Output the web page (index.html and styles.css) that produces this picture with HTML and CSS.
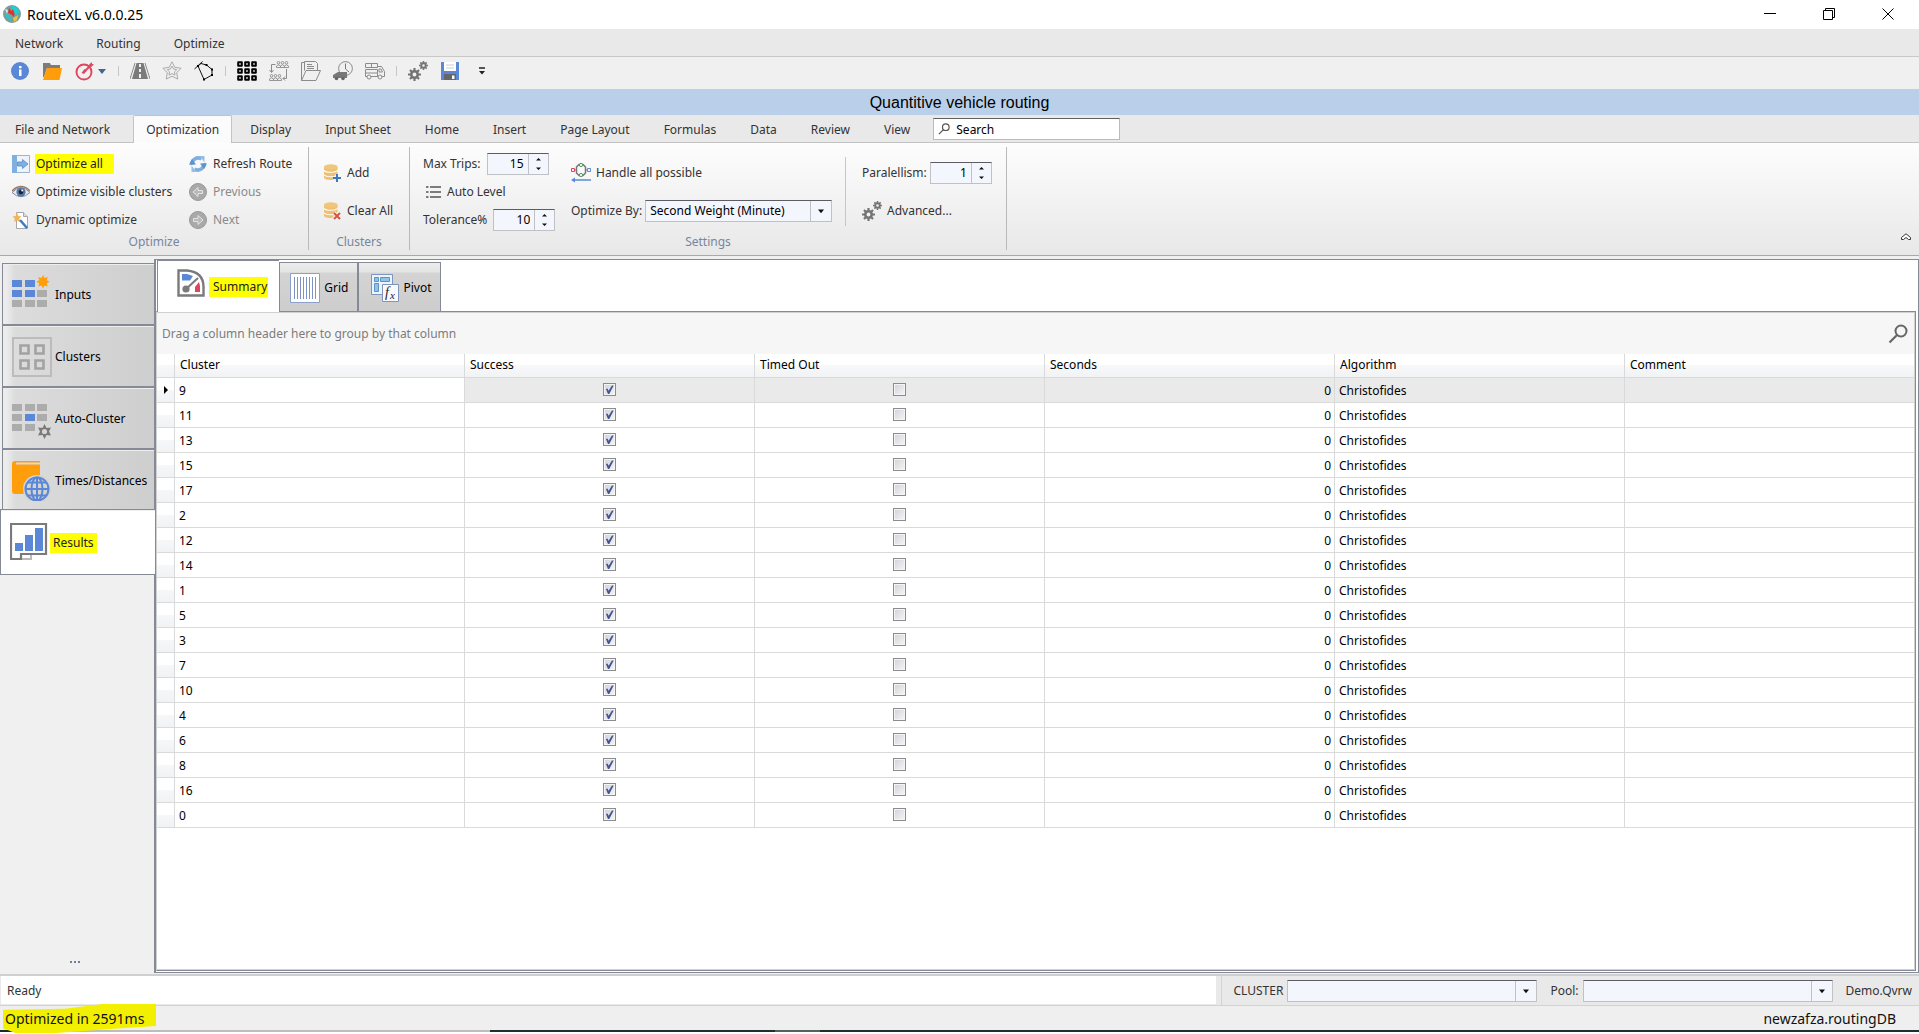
FILE: index.html
```
<!DOCTYPE html>
<html lang="en">
<head>
<meta charset="utf-8">
<title>RouteXL v6.0.0.25</title>
<link rel="stylesheet" href="styles.css">
</head>
<body>
<svg class="defs" width="0" height="0" aria-hidden="true">
  <symbol id="gear" viewBox="0 0 12 12"><circle cx="6" cy="6" r="3" fill="none" stroke="currentColor" stroke-width="2.400"/><path d="M6 0v2.500M6 9.500V12M0 6h2.500M9.500 6H12M1.800 1.800l1.700 1.700M8.500 8.500l1.700 1.700M1.800 10.200l1.700-1.700M8.500 3.500l1.700-1.700" stroke="currentColor" stroke-width="2"/></symbol>
  <symbol id="gears" viewBox="0 0 20 20"><use href="#gear" x="0" y="7" width="13" height="13"/><use href="#gear" x="11" y="0" width="9" height="9"/></symbol>
  <symbol id="lens" viewBox="0 0 20 20"><circle cx="13" cy="7" r="5.500" fill="none" stroke="currentColor" stroke-width="2"/><path d="M9 11l-7.500 7.500" stroke="currentColor" stroke-width="2.200"/></symbol>
  <symbol id="db" viewBox="0 0 17 18"><path d="M0 3v10.500c0 1.600 3 2.500 6.500 2.500s7-.900 7-2.500V3z" fill="#edc175"/><ellipse cx="6.800" cy="2.800" rx="6.800" ry="2.600" fill="#f0c67c"/><path d="M0 6.300c1 1.600 4 2 6.800 2s5.700-.400 6.800-2M0 10.700c1 1.600 4 2 6.800 2s5.700-.400 6.800-2" fill="none" stroke="#fff" stroke-width="1.100"/></symbol>
  <symbol id="spin" viewBox="0 0 9 14"><path d="M2 3.500L4.500 1 7 3.500zM2 10.500L4.500 13 7 10.500z" fill="#111"/></symbol>
  <symbol id="drop" viewBox="0 0 8 5"><path d="M1 .500h6L4 4.200z" fill="#111"/></symbol>
  <symbol id="people" viewBox="0 0 13 7"><g fill="none" stroke="currentColor" stroke-width=".900"><circle cx="2.500" cy="1.800" r="1.300"/><circle cx="6.500" cy="1.800" r="1.300"/><circle cx="10.500" cy="1.800" r="1.300"/><path d="M.500 6.500V5q2-2.500 4 0v1.500zM4.500 6.500V5q2-2.500 4 0v1.500zM8.500 6.500V5q2-2.500 4 0v1.500z"/></g></symbol>
</svg>

<header class="titlebar">
  <svg class="logo" viewBox="0 0 18 18" width="18" height="18"><circle cx="9" cy="9" r="9" fill="#7d9c9d"/><path d="M9 1a8 8 0 0 1 7.500 6L13 10l-2-3-3-1z" fill="#20cfd3"/><path d="M2 8l4 2 3 6a8 8 0 0 1-7-8z" fill="#2cc3c7"/><path d="M6 3l2.500 3L10 4l1.500 4.500L11 12 8.500 9.500 5 8z" fill="#d8372f"/><path d="M10 13l5-3-1 5-3 2z" fill="#e6c336"/><path d="M2 4l3 1-1 4z" fill="#dfe9e6"/></svg>
  <h1>RouteXL v6.0.0.25</h1>
  <div class="window-buttons">
    <button aria-label="Minimize"><svg viewBox="0 0 12 12" width="12" height="12"><path d="M0 5.500h12" stroke="#000"/></svg></button>
    <button aria-label="Restore"><svg viewBox="0 0 12 12" width="12" height="12"><path d="M.500 2.500h9v9h-9zM2.500 2V.500h9v9H10" fill="none" stroke="#000"/></svg></button>
    <button aria-label="Close"><svg viewBox="0 0 12 12" width="12" height="12"><path d="M.500.500l11 11M11.500.500l-11 11" stroke="#000"/></svg></button>
  </div>
</header>

<nav class="menubar"><button>Network</button><button>Routing</button><button>Optimize</button></nav>

<div class="toolbar">
  <button aria-label="Information"><svg viewBox="0 0 20 20" width="20" height="20"><circle cx="10" cy="10" r="9" fill="#5a87d6"/><path d="M9 5h2.500v2.200H9zM9 8.500h2.500V15H9z" fill="#fff"/></svg></button>
  <button aria-label="Open"><svg viewBox="0 0 20 20" width="20" height="20"><path d="M1 2h7l1 2h9v3H5L2 16H1z" fill="#7c7c7c"/><path d="M5 7h15l-2.500 12H1z" fill="#ff9d0a"/></svg></button>
  <button class="split" aria-label="Target"><svg viewBox="0 0 20 20" width="20" height="20"><circle cx="9" cy="11" r="7.500" fill="none" stroke="#e0455e" stroke-width="1.900"/><path d="M9 11l8-8" stroke="#e0455e" stroke-width="2"/><path d="M14 4l2.500-3 .500 2 2 .500-3 2.500zM6.500 12l3-4 2 2-2.500 3z" fill="#e0455e"/></svg><svg class="caret" viewBox="0 0 8 5" width="8" height="5"><path d="M0 0h8L4 5z" fill="#45658e"/></svg></button>
  <i class="sep"></i>
  <button aria-label="Road"><svg viewBox="0 0 20 20" width="20" height="20"><path d="M6.500 2h7L18 18H2z" fill="#7a7a7a"/><path d="M5 2L0 18M15 2l5 16" stroke="#8a8a8a"/><path d="M10 3v3M10 8v3M10 13v4" stroke="#f0f0f0" stroke-width="2"/></svg></button>
  <button aria-label="Favorite"><svg viewBox="0 0 20 20" width="20" height="20" fill="none" stroke="#aaa"><path d="M10 .800l2.800 5.500 6.300 1-4.400 4.300 1 6.500L10 15.200l-5.700 2.900 1-6.500L.900 7.300l6.300-1z"/><path d="M10 5l1.600 3 3.200.600-2.300 2.200.5 3.300-3-1.500-3 1.500.500-3.300L5.200 8.600 8.400 8z"/></svg></button>
  <button aria-label="Polygon"><svg viewBox="0 0 20 20" width="20" height="20"><path d="M.500 8l8-7.500M4 5l3-2.500L12.500 4 18 8.500v5.500L10 18.500z" fill="none" stroke="#111"/><path d="M3 4h2v2H3zM11.500 3h2v2h-2zM17 7.500h2v2h-2zM17 13h2v2h-2zM9 17.500h2v2H9z" fill="#000"/></svg></button>
  <i class="sep"></i>
  <button aria-label="Clusters grid"><svg viewBox="0 0 20 20" width="20" height="20" fill="none" stroke="#000" stroke-width="2"><path d="M1.200 1.200h3.600v3.600H1.200zM8.200 1.200h3.600v3.600H8.200zM15.200 1.200h3.600v3.600h-3.600zM1.200 8.200h3.600v3.600H1.200zM8.200 8.200h3.600v3.600H8.200zM15.200 8.200h3.600v3.600h-3.600zM1.200 15.200h3.600v3.600H1.200zM8.200 15.200h3.600v3.600H8.200zM15.200 15.200h3.600v3.600h-3.600z" stroke-linejoin="round"/></svg></button>
  <button class="gray" aria-label="Teams"><svg viewBox="0 0 20 20" width="20" height="20"><use href="#people" x="7" y="0" width="13" height="7"/><use href="#people" x="0" y="13" width="13" height="7"/><path d="M6.500 3.500h-4v7.500M.500 9l2 2.500 2-2.500M17.500 8v9.500h-3.500M16 15.500l-2 2 2 2" fill="none" stroke="currentColor"/></svg></button>
  <button class="gray" aria-label="Documents"><svg viewBox="0 0 20 20" width="20" height="20" fill="none" stroke="currentColor"><path d="M.500 19.500V1.500h3M3.500 9.500v-9h11l2 2v7M.500 19.500h14.500l4.500-10H5z"/><path d="M6 3.500h5M6 5.500h7M6 7.500h7"/></svg></button>
  <button class="gray" aria-label="Delivery times"><svg viewBox="0 0 20 20" width="20" height="20"><circle cx="12.500" cy="7.500" r="6.900" fill="none" stroke="#8a8a8a"/><path d="M12.500 2.500v5.500l3.500 3" fill="none" stroke="#777"/><path d="M5 11h9v6H0v-3z" fill="#777"/><circle cx="3.500" cy="17.500" r="1.800" fill="#666"/><circle cx="10" cy="17.500" r="1.800" fill="#666"/></svg></button>
  <button class="gray" aria-label="Truck"><svg viewBox="0 0 20 20" width="20" height="20" fill="none" stroke="currentColor"><path d="M.500 2.500h12v4H.500zM6.500 2.500v4M.500 8.500h12v7H.500zM.500 12h12M12.500 5.500h4l3 5v5h-7M14 8h2l1.500 3H14z"/><circle cx="4" cy="16" r="2" fill="#f0f0f0"/><circle cx="15" cy="16" r="2" fill="#f0f0f0"/></svg></button>
  <i class="sep"></i>
  <button class="dark" aria-label="Settings"><svg width="20" height="20"><use href="#gears"/></svg></button>
  <button aria-label="Save"><svg viewBox="0 0 20 20" width="20" height="20"><path d="M1 1h18v18H1z" fill="#5a87d6"/><path d="M4 1h12v9H4z" fill="#fff"/><path d="M6 4h8M6 7h8" stroke="#ccc"/><path d="M4 13h12v6H4z" fill="#666"/><path d="M12 14.500h2.500V18H12z" fill="#fff"/></svg></button>
  <button aria-label="Customize"><svg viewBox="0 0 6 8" width="6" height="8"><path d="M0 1h6" stroke="#222" stroke-width="1.500"/><path d="M0 4h6L3 7.500z" fill="#222"/></svg></button>
</div>

<h2 class="doc-title">Quantitive vehicle routing</h2>

<nav class="ribbon-tabs">
  <button>File and Network</button><button class="active">Optimization</button><button>Display</button><button>Input Sheet</button><button>Home</button><button>Insert</button><button>Page Layout</button><button>Formulas</button><button>Data</button><button>Review</button><button>View</button>
  <label class="search"><svg width="12" height="12"><use href="#lens"/></svg><input type="text" value="Search" aria-label="Search"></label>
</nav>

<section class="ribbon">
  <div class="group optimize">
    <div class="columns">
      <div class="col three">
        <button><svg viewBox="0 0 18 18" width="18" height="18"><path d="M.500.500h17v17H.500z" fill="#eef3fb" stroke="#9fb2d2"/><path d="M0 0h5v18H0z" fill="#7fb0e0"/><path d="M5.500 7h5V4.500L16 9l-5.500 4.500V11h-5z" fill="#7eb0e2" stroke="#5a8cc4" stroke-width=".800"/></svg><span class="mark">Optimize all</span></button>
        <button><svg viewBox="0 0 18 18" width="18" height="18"><path d="M0 9.500Q9 0 18 9.500 9 18 0 9.500z" fill="#e4e9f3" stroke="#87899a"/><path d="M0 8Q9-1 18 8" fill="none" stroke="#9a7a62" stroke-width="1.600"/><circle cx="9" cy="9" r="4.600" fill="#5379a9"/><circle cx="9" cy="9" r="2.300" fill="#14243c"/><circle cx="10.200" cy="7.500" r="1" fill="#fff"/></svg><span>Optimize visible clusters</span></button>
        <button><svg viewBox="0 0 18 18" width="18" height="18"><path d="M4.500 1.500h7l4 4v12h-11z" fill="#fff" stroke="#a8a8a8"/><path d="M11.500 1.500v4h4" fill="#ddd" stroke="#a8a8a8"/><path d="M5 2l1.400 3 3.200.400-2.400 2.200.7 3.400L5 9.400 2.100 11l.7-3.400L.400 5.400 3.600 5z" fill="#f2b457"/><path d="M8 9l7 8" stroke="#3d7abf" stroke-width="2.600"/></svg><span>Dynamic optimize</span></button>
      </div>
      <div class="col three">
        <button><svg viewBox="0 0 18 18" width="18" height="18"><path d="M3 10A6.200 6.200 0 0 1 12.500 4M15 8a6.200 6.200 0 0 1-9.500 6" fill="none" stroke="#7fb0e0" stroke-width="3.600"/><path d="M0 9.500h7L3 4zM11 8.500h7l-3 5.500z" fill="#5b94d0"/><path d="M10.500 1h5v6.500zM7.500 17h-5v-6.500z" fill="#94bfe8"/></svg><span>Refresh Route</span></button>
        <button disabled><svg viewBox="0 0 18 18" width="18" height="18"><circle cx="9" cy="9" r="8.500" fill="#a9a9a9" stroke="#989898"/><path d="M4 9l5-4.500V7.500h4.500v3H9v3z" fill="#b8b8b8" stroke="#e4e4e4"/></svg><span>Previous</span></button>
        <button disabled><svg viewBox="0 0 18 18" width="18" height="18"><circle cx="9" cy="9" r="8.500" fill="#a9a9a9" stroke="#989898"/><path d="M14 9L9 4.500V7.500H4.500v3H9v3z" fill="#b8b8b8" stroke="#e4e4e4"/></svg><span>Next</span></button>
      </div>
    </div>
    <h3>Optimize</h3>
  </div>
  <div class="group clusters">
    <div class="columns">
      <div class="col two">
        <button><svg viewBox="0 0 17 18" width="17" height="18"><use href="#db" width="17" height="18"/><path d="M13 10.500v7M9.500 14h7" stroke="#f4f4f4" stroke-width="4"/><path d="M13 10v8M9 14h8" stroke="#3d78bd" stroke-width="2"/></svg><span>Add</span></button>
        <button><svg viewBox="0 0 17 18" width="17" height="18"><use href="#db" width="17" height="18"/><path d="M10 11l6 6M16 11l-6 6" stroke="#f4f4f4" stroke-width="4"/><path d="M10 11l6 6M16 11l-6 6" stroke="#d9533c" stroke-width="2"/></svg><span>Clear All</span></button>
      </div>
    </div>
    <h3>Clusters</h3>
  </div>
  <div class="group settings">
    <div class="columns">
      <div class="col three">
        <label class="field">Max Trips:<span class="spin"><input type="number" value="15"><svg width="9" height="14"><use href="#spin"/></svg></span></label>
        <button class="list"><svg viewBox="0 0 15 14" width="15" height="14"><path d="M0 2h2.500M4 2h11M0 7h2.500M4 7h11M0 12h2.500M4 12h11" stroke="#7c7c7c" stroke-width="2"/></svg><span>Auto Level</span></button>
        <label class="field">Tolerance%<span class="spin"><input type="number" value="10"><svg width="9" height="14"><use href="#spin"/></svg></span></label>
      </div>
      <div class="col two">
        <button><svg viewBox="0 0 20 20" width="20" height="20" fill="none"><path d="M4 7h2M14 7h2" stroke="#777"/><path d="M5.500 4L8 1.500h4L14.500 4v6L12 12.500H8L5.500 10z" stroke="#777" stroke-width="1.500"/><path d="M.500 5.500h3v3h-3z" stroke="#e0455e"/><path d="M16.500 5.500h3v3h-3z" stroke="#5a87d6"/><circle cx="10" cy="2" r="1.600" fill="#fff" stroke="#3f9e54"/><circle cx="10" cy="12" r="1.600" fill="#fff" stroke="#3f9e54"/><path d="M3 17h17" stroke="#5a87d6" stroke-width="1.500"/><path d="M0 17l4-2.500v5z" fill="#5a87d6"/></svg><span>Handle all possible</span></button>
        <label class="field">Optimize By:<span class="combo weight"><select><option>Second Weight (Minute)</option></select><svg width="8" height="5"><use href="#drop"/></svg></span></label>
      </div>
      <div class="col two advanced">
        <label class="field">Paralellism:<span class="spin"><input type="number" value="1"><svg width="9" height="14"><use href="#spin"/></svg></span></label>
        <button class="dark"><svg width="20" height="20"><use href="#gears"/></svg><span>Advanced...</span></button>
      </div>
    </div>
    <h3>Settings</h3>
  </div>
  <button class="collapse" aria-label="Collapse ribbon"><svg viewBox="0 0 10 8" width="10" height="8"><path d="M.500 4.500L5 .800l4.500 3.700v2H7.500L5 4.500 2.500 6.500h-2z" fill="#fff" stroke="#333"/></svg></button>
</section>

<main>
  <nav class="side">
    <button><svg viewBox="0 0 40 40" width="40" height="40"><path d="M0 5h10v7H0zM13 5h10v7H13zM0 15h10v7H0zM13 15h10v7H13z" fill="#5a87d6"/><path d="M25 15h10v7H25zM0 25h10v7H0zM13 25h10v7H13zM25 25h10v7H25z" fill="#acacac"/><path d="M31 0l1.500 3 3.200-1-1 3.200 3 1.500-3 1.500 1 3.200-3.200-1L31 13.500l-1.500-3.100-3.200 1 1-3.200-3-1.500 3-1.500-1-3.200 3.200 1z" fill="#ff9d0a"/></svg>Inputs</button>
    <button><svg viewBox="0 0 40 40" width="40" height="40" fill="none"><path d="M1 1h38v38H1z" stroke="#bcbcbc" stroke-width="2"/><path d="M8.500 8.500h8v8h-8zM23.500 8.500h8v8h-8zM8.500 23.500h8v8h-8zM23.500 23.500h8v8h-8z" stroke="#a2a2a2" stroke-width="2.600"/></svg>Clusters</button>
    <button><svg viewBox="0 0 40 40" width="40" height="40"><path d="M0 5h10v7H0zM13 5h10v7H13zM25 5h10v7H25zM0 15h10v7H0zM25 15h10v7H25zM0 25h10v7H0zM13 25h10v7H13z" fill="#acacac"/><path d="M13 15h10v7H13z" fill="#5a87d6"/><path d="M32.500 25l2 4 4.500-.500-2 4 2 4-4.500-.500-2 4-2-4-4.500.500 2-4-2-4 4.500.500z" fill="#7a7a7a"/><circle cx="32.500" cy="32.500" r="2.600" fill="#d6d6d6"/></svg>Auto-Cluster</button>
    <button><svg viewBox="0 0 40 40" width="40" height="40"><path d="M3 0h25v1.500H4v2h24V15L12 33H3Q0 33 0 30V3Q0 0 3 0z" fill="#ff9d0a"/><circle cx="25" cy="28" r="14" fill="#d3d3d3"/><g fill="none" stroke="#5a87d6" stroke-width="2"><circle cx="25" cy="28" r="11.500"/><ellipse cx="25" cy="28" rx="5.500" ry="11.500"/><path d="M25 16.500v23M13.500 28h23M16 21.500h18M16 34.500h18"/></g></svg>Times/Distances</button>
    <button class="active"><svg viewBox="0 0 40 40" width="40" height="40"><path d="M1 1h35v30H11v5H1z" fill="#fff" stroke="#7a7a7a" stroke-width="2.200"/><path d="M12 36h9v-4" fill="none" stroke="#bbb" stroke-width="2"/><path d="M5 20h8v8H5zM15 12h8v16h-8zM25 5h8v23h-8z" fill="#5a87d6"/></svg><span class="mark">Results</span></button>
    <button class="more" aria-label="More"><i></i><i></i><i></i></button>
  </nav>

  <section class="panel">
    <div class="tabs">
      <button class="active"><svg viewBox="0 0 28 28" width="28" height="28"><path d="M1.500 1.500H10Q26.500 3 26.500 18v8.500h-25z" fill="#fff" stroke="#7a7a7a" stroke-width="2.400"/><path d="M5 5h5l6 2-3 4.500H5z" fill="#5a87d6"/><path d="M9 20l12-11" stroke="#7a7a7a" stroke-width="2"/><circle cx="9" cy="20" r="3.600" fill="#7a7a7a"/><path d="M18 18l4-5 1 4v6h-5z" fill="#e0455e"/></svg><span class="mark">Summary</span></button>
      <button><svg viewBox="0 0 30 30" width="30" height="30"><path d="M.500.500h29v29H.500z" fill="#fff" stroke="#8ea0c8"/><path d="M4.500 4v22M7.500 4v22M10.500 4v22M13.500 4v22M16.500 4v22M19.500 4v22M22.500 4v22M25.500 4v22" stroke="#7f93c2"/></svg>Grid</button>
      <button><svg viewBox="0 0 28 28" width="28" height="28"><path d="M.500.500h21v20H.500z" fill="#eef4fb" stroke="#7f95bf"/><path d="M3.500 3.500h4v4h-4zM9.500 3.500h9v4h-9zM3.500 9.500h4v8h-4z" fill="#8fc3ea" stroke="#5b93c4"/><path d="M11.500 10.500h16v17h-16z" fill="#f8faff" stroke="#7f95bf"/><text x="14" y="23" class="fx">f</text><text x="19" y="25" class="fx small">x</text></svg>Pivot</button>
    </div>
    <div class="sheet">
      <div class="group-bar"><span>Drag a column header here to group by that column</span><button aria-label="Find"><svg width="20" height="20"><use href="#lens"/></svg></button></div>
      <table>
        <colgroup><col class="rowhead"><col class="data"><col class="data"><col class="data"><col class="data"><col class="data"><col></colgroup>
        <thead><tr><th></th><th>Cluster</th><th>Success</th><th>Timed Out</th><th>Seconds</th><th>Algorithm</th><th>Comment</th></tr></thead>
        <tbody>
          <tr class="current"><td><svg viewBox="0 0 4 8" width="4" height="8"><path d="M0 0l4 4-4 4z"/></svg></td><td>9</td><td><input type="checkbox" aria-label="Success 9" checked></td><td><input type="checkbox" aria-label="Timed out 9"></td><td>0</td><td>Christofides</td><td></td></tr>
          <tr><td></td><td>11</td><td><input type="checkbox" aria-label="Success 11" checked></td><td><input type="checkbox" aria-label="Timed out 11"></td><td>0</td><td>Christofides</td><td></td></tr>
          <tr><td></td><td>13</td><td><input type="checkbox" aria-label="Success 13" checked></td><td><input type="checkbox" aria-label="Timed out 13"></td><td>0</td><td>Christofides</td><td></td></tr>
          <tr><td></td><td>15</td><td><input type="checkbox" aria-label="Success 15" checked></td><td><input type="checkbox" aria-label="Timed out 15"></td><td>0</td><td>Christofides</td><td></td></tr>
          <tr><td></td><td>17</td><td><input type="checkbox" aria-label="Success 17" checked></td><td><input type="checkbox" aria-label="Timed out 17"></td><td>0</td><td>Christofides</td><td></td></tr>
          <tr><td></td><td>2</td><td><input type="checkbox" aria-label="Success 2" checked></td><td><input type="checkbox" aria-label="Timed out 2"></td><td>0</td><td>Christofides</td><td></td></tr>
          <tr><td></td><td>12</td><td><input type="checkbox" aria-label="Success 12" checked></td><td><input type="checkbox" aria-label="Timed out 12"></td><td>0</td><td>Christofides</td><td></td></tr>
          <tr><td></td><td>14</td><td><input type="checkbox" aria-label="Success 14" checked></td><td><input type="checkbox" aria-label="Timed out 14"></td><td>0</td><td>Christofides</td><td></td></tr>
          <tr><td></td><td>1</td><td><input type="checkbox" aria-label="Success 1" checked></td><td><input type="checkbox" aria-label="Timed out 1"></td><td>0</td><td>Christofides</td><td></td></tr>
          <tr><td></td><td>5</td><td><input type="checkbox" aria-label="Success 5" checked></td><td><input type="checkbox" aria-label="Timed out 5"></td><td>0</td><td>Christofides</td><td></td></tr>
          <tr><td></td><td>3</td><td><input type="checkbox" aria-label="Success 3" checked></td><td><input type="checkbox" aria-label="Timed out 3"></td><td>0</td><td>Christofides</td><td></td></tr>
          <tr><td></td><td>7</td><td><input type="checkbox" aria-label="Success 7" checked></td><td><input type="checkbox" aria-label="Timed out 7"></td><td>0</td><td>Christofides</td><td></td></tr>
          <tr><td></td><td>10</td><td><input type="checkbox" aria-label="Success 10" checked></td><td><input type="checkbox" aria-label="Timed out 10"></td><td>0</td><td>Christofides</td><td></td></tr>
          <tr><td></td><td>4</td><td><input type="checkbox" aria-label="Success 4" checked></td><td><input type="checkbox" aria-label="Timed out 4"></td><td>0</td><td>Christofides</td><td></td></tr>
          <tr><td></td><td>6</td><td><input type="checkbox" aria-label="Success 6" checked></td><td><input type="checkbox" aria-label="Timed out 6"></td><td>0</td><td>Christofides</td><td></td></tr>
          <tr><td></td><td>8</td><td><input type="checkbox" aria-label="Success 8" checked></td><td><input type="checkbox" aria-label="Timed out 8"></td><td>0</td><td>Christofides</td><td></td></tr>
          <tr><td></td><td>16</td><td><input type="checkbox" aria-label="Success 16" checked></td><td><input type="checkbox" aria-label="Timed out 16"></td><td>0</td><td>Christofides</td><td></td></tr>
          <tr><td></td><td>0</td><td><input type="checkbox" aria-label="Success 0" checked></td><td><input type="checkbox" aria-label="Timed out 0"></td><td>0</td><td>Christofides</td><td></td></tr>
        </tbody>
      </table>
    </div>
  </section>
</main>

<div class="status">
  <p class="ready">Ready</p>
  <div class="pickers">
    <label class="field">CLUSTER<span class="combo"><select><option></option></select><svg width="8" height="5"><use href="#drop"/></svg></span></label>
    <label class="field">Pool:<span class="combo"><select><option></option></select><svg width="8" height="5"><use href="#drop"/></svg></span></label>
    <span>Demo.Qvrw</span>
  </div>
</div>
<footer class="footer"><span class="done">Optimized in 2591ms</span><span>newzafza.routingDB</span></footer>
<div class="taskbar-edge"></div>
</body>
</html>
```
FILE: styles.css
```
* { box-sizing: border-box; }

body {
  margin: 0;
  min-height: 100vh;
  display: flex;
  flex-direction: column;
  background: #f0f0f0;
  color: #333;
  font: 12px/16px "Noto Sans", Tahoma, sans-serif;
}

h1, h2, h3, p { margin: 0; font-weight: 400; }
button, input, select { font: inherit; color: inherit; }
button {
  display: flex;
  align-items: center;
  margin: 0;
  padding: 0;
  border: 0;
  background: none;
  white-space: nowrap;
}
svg { display: block; flex: none; }
.defs { position: absolute; }

/* Title bar */
.titlebar {
  display: flex;
  align-items: center;
  height: 29px;
  padding-left: 3px;
  background: #fff;
  color: #000;
}
.titlebar h1 {
  flex: 1;
  padding-left: 6px;
  font-size: 14px;
  line-height: 20px;
}
.titlebar .logo { margin-bottom: 2px; }
.window-buttons { display: flex; align-self: stretch; margin-right: 2px; }
.window-buttons button { width: 59px; padding-bottom: 1px; justify-content: center; }

/* Menu and toolbar */
.menubar {
  display: flex;
  height: 28px;
  padding: 2px 0 0 15px;
  gap: 33px;
  background: #e9e9e9;
  border-bottom: 1px solid #c8c8c8;
}
.toolbar {
  display: flex;
  align-items: center;
  height: 32px;
  padding: 0 4px 4px;
}
.toolbar button { width: 32px; height: 28px; justify-content: center; }
.toolbar .split { width: 45px; gap: 3px; }
.toolbar .sep { width: 1px; height: 10px; margin: 0 5px; background: #c6c6c6; }
.gray { color: #8c8c8c; }
.dark svg { color: #747474; }

.doc-title {
  height: 26px;
  background: #bad0ea;
  color: #000;
  font: 16px/28px "Liberation Sans", Arial, sans-serif;
  text-align: center;
}

/* Ribbon */
.ribbon-tabs {
  display: flex;
  height: 28px;
  background: #e9e9e9;
  border-bottom: 1px solid #c3c3c3;
}
.ribbon-tabs button { height: 27px; padding: 2px 17px 0; }
.ribbon-tabs button:first-child { padding: 2px 23px 0 15px; }
.ribbon-tabs .active {
  height: 28px;
  padding: 0 12px;
  margin-right: 1px;
  background: #fbfbfb;
  border: 1px solid #c3c3c3;
  border-bottom: 0;
  border-radius: 2px 2px 0 0;
}
.search {
  display: flex;
  align-items: center;
  width: 187px;
  height: 22px;
  margin: 3px 0 0 6px;
  padding-left: 4px;
  background: #fff;
  border: 1px solid #bbb;
  border-top-color: #606060;
  color: #555;
}
.search input {
  width: 100%;
  min-width: 0;
  padding: 1px 0 0 6px;
  border: 0;
  background: none;
  color: #000;
}

.ribbon {
  position: relative;
  display: flex;
  height: 113px;
  padding: 4px 0 5px;
  background: linear-gradient(#fdfdfd, #e8e8e8);
  border-bottom: 1px solid #a9a9a9;
}
.group {
  display: flex;
  flex-direction: column;
  border-right: 1px solid #b9b9b9;
}
.group h3 { color: #78859e; font-size: 12px; text-align: center; }
.columns { display: flex; height: 87px; padding-top: 2px; }
.col { display: grid; align-content: center; align-items: center; justify-items: start; }
.col.three { grid-auto-rows: 28px; }
.col.three .field { gap: 6px; }
.col.two { grid-auto-rows: 30px; row-gap: 8px; }
.col button { gap: 6px; }
.col button:disabled { color: #8a8a8a; }
.optimize { width: 309px; }
.optimize .columns { padding-left: 12px; }
.optimize .col:first-child { width: 177px; }
.clusters { width: 101px; }
.clusters .columns { padding-left: 15px; }
.settings { width: 597px; }
.settings .columns { padding-left: 13px; }
.settings .col:first-child { width: 148px; }
.settings .col:nth-child(2) { width: 274px; }
.settings .col:nth-child(2) button { gap: 5px; }
.col.advanced {
  margin: 8px 0;
  padding-left: 16px;
  border-left: 1px solid #c6c6c6;
}
.col.advanced button { gap: 5px; }
.list { padding-left: 3px; }

.mark { padding: 2px 0; background: #ff0; color: #222; }
.optimize .mark { margin-left: -1px; padding: 2px 11px 2px 1px; }

.field { display: flex; align-items: center; gap: 3px; }
.spin, .combo {
  display: flex;
  height: 22px;
  background: #f3f6fc;
  border: 1px solid #bfc1c6;
  border-top-color: #5c5c66;
  color: #000;
}
.spin { width: 62px; }
.spin input, .combo select {
  flex: 1;
  min-width: 0;
  padding: 0 4px;
  border: 0;
  border-right: 1px solid #bfc1c6;
  border-radius: 0;
  background: none;
  appearance: none;
}
.spin input { text-align: right; appearance: textfield; }
.spin input::-webkit-inner-spin-button { display: none; }
.spin svg { margin: 3px 5px; }
.combo { width: 250px; }
.combo.weight { width: 187px; }
.combo svg { margin: 8px 6px; }

.collapse { position: absolute; right: 8px; bottom: 14px; }

/* Work area */
main { flex: 1; display: flex; padding-top: 3px; }

.side {
  display: flex;
  flex-direction: column;
  width: 154px;
  padding-top: 4px;
}
.side button {
  height: 62px;
  margin-left: 2px;
  padding: 2px 0 0 9px;
  gap: 3px;
  border: 1px solid #868a96;
  border-width: 1px 0 1px 1px;
  background: linear-gradient(90deg, #ececec 0, #ececec 3px, #dcdcdc 12px, #cecece);
  color: #000;
  box-shadow: inset 0 1px #eee;
}
.side .active {
  position: relative;
  height: 66px;
  margin: -2px -1px 0 0;
  gap: 0;
  background: #fff;
  border-width: 1px;
  border-right: 0;
}
.side .mark { padding: 2px 3px; }
.side .more {
  height: 20px;
  margin: auto auto 0 68px;
  padding: 0 0 4px 2px;
  gap: 2px;
  border: 0;
  background: none;
  box-shadow: none;
}
.more i { width: 2px; height: 2px; background: #6f7f9d; }

.panel {
  flex: 1;
  min-width: 0;
  display: flex;
  flex-direction: column;
  margin-bottom: 1px;
  padding: 0 2px 1px 0;
  border: 1px solid #868a96;
  border-left-width: 2px;
  background: #fff;
}
.tabs { display: flex; align-items: flex-end; height: 51px; padding-left: 1px; }
.tabs button {
  height: 49px;
  border: 1px solid #868a96;
  border-bottom: 0;
  background: linear-gradient(#ececec 0, #e4e4e4 9px, #d4d4d4 10px, #cdcdcd);
  color: #000;
}
.tabs button + button { padding: 1px 9px 0 10px; gap: 4px; }
.tabs button:last-child { gap: 4px; padding-left: 12px; }
.tabs .active {
  position: relative;
  height: 52px;
  margin-bottom: -1px;
  padding: 0 11px 8px 19px;
  gap: 4px;
  border-right: 0;
  background: #fff;
}
.tabs .active .mark { margin-top: 8px; padding: 2px 1px 2px 4px; }
.fx { font: italic 14px "Liberation Serif", serif; fill: #223; }
.fx.small { font-size: 11px; }

.sheet {
  flex: 1;
  border: 1px solid #868a96;
  border-left-color: #d0d0d0;
  box-shadow: inset -1px -1px #d0d0d0, inset 0 1px #d0d0d0;
  padding: 1px 1px 1px 0;
}
.group-bar {
  display: flex;
  align-items: center;
  justify-content: space-between;
  height: 41px;
  padding: 0 6px 0 5px;
  background: #f6f6f6;
  color: #7c7c7c;
}
.group-bar svg { color: #666; }

table { width: 100%; border-spacing: 0; table-layout: fixed; color: #000; }
.rowhead { width: 18px; }
.data { width: 290px; }
th, td {
  height: 25px;
  padding: 1px 4px 0;
  border: 0 solid #dadada;
  border-width: 0 1px 1px 0;
  text-align: left;
  font-weight: 400;
}
th:last-child, td:last-child { border-right: 0; }
th {
  height: 24px;
  padding: 0 5px 2px;
  background: linear-gradient(#fff 0, #fff 11px, #f8f8fa 11px, #f1f2f4);
}
td:first-child {
  padding: 0 7px;
  background: linear-gradient(#fff 0, #fff 12px, #f6f7f9 12px, #f1f2f4);
}
td:nth-child(3), td:nth-child(4) { text-align: center; }
td:nth-child(5) { text-align: right; padding-right: 3px; }
.current td:nth-child(n + 3) { background: #eaeaea; }

input[type="checkbox"] {
  appearance: none;
  display: block;
  width: 13px;
  height: 13px;
  margin: 0 auto 2px;
  border: 1px solid #8c8c8c;
  background: linear-gradient(135deg, #d0d2d8, #f6f6f6);
  box-shadow: inset 0 0 0 1px #f4f4f4;
}
input[type="checkbox"]:checked::before {
  content: "";
  display: block;
  width: 11px;
  height: 11px;
  background: #445694;
  clip-path: polygon(18% 45%, 32% 42%, 42% 62%, 72% 14%, 88% 14%, 48% 90%, 36% 90%);
}

/* Status rows */
.status {
  display: flex;
  height: 31px;
  border-top: 2px solid #cfcfcf;
  background: #e9e9e9;
}
.ready {
  flex: 1;
  margin: 0 5px 1px 1px;
  padding: 7px 6px 5px;
  background: #fff;
}
.pickers {
  display: flex;
  align-items: center;
  gap: 13px;
  padding: 0 7px 0 12px;
  border-left: 1px solid #d4d4d4;
}
.pickers .field { gap: 4px; }
.footer {
  display: flex;
  justify-content: space-between;
  height: 25px;
  padding: 2px 23px 0 5px;
  border-top: 1px solid #d2d2d2;
  background: #efefef;
  color: #111;
  font-size: 14px;
  line-height: 22px;
}
.done { position: relative; z-index: 0; }
.done::before {
  content: "";
  position: absolute;
  z-index: -1;
  inset: -4px -12px -3px -2px;
  background: #f2f000;
  clip-path: polygon(0 20%, 40% 16%, 65% 0, 100% 0, 100% 76%, 70% 86%, 35% 100%, 8% 100%, 0 84%);
}
.taskbar-edge {
  height: 4px;
  background: linear-gradient(90deg, #182c2d 60px, #bdbdbd 60px, #bdbdbd 490px, #1f3030 490px, #1f3030 775px, #56625f 775px, #56625f 820px, #1f3030 820px);
  border-bottom: 2px solid #fff;
}
```
